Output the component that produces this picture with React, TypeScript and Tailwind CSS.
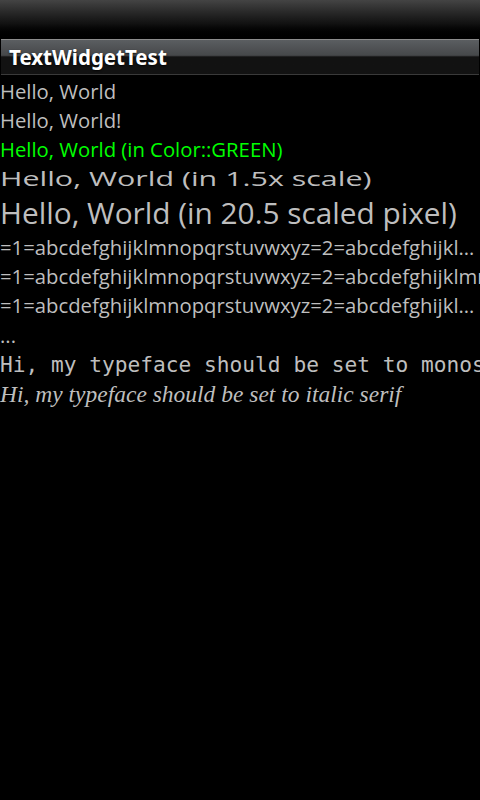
import React from 'react';

const sans = "font-['Open_Sans','Noto_Sans',sans-serif]";

export default function App() {
    return (
        <div className="w-[480px] h-[800px] bg-black overflow-hidden">
            {/* status bar */}
            <div className="h-[39px] bg-gradient-to-b from-[#444444] via-[#121212] via-60% to-black" />

            {/* title bar */}
            <div className="h-[36px] mx-[1px] border-t border-[#8c8c8c] border-b border-b-[#3a3a3a] bg-gradient-to-b from-[#5b5e61] from-0% via-[#46484a] via-45% to-[#121212] to-50% flex items-center">
                <span className="pl-[8px] text-[20.5px] font-bold text-white [text-shadow:0_1px_2px_rgba(0,0,0,0.8)] font-['Noto_Sans','Open_Sans',sans-serif]">
                    TextWidgetTest
                </span>
            </div>

            {/* text views */}
            <div className={`flex flex-col pt-[2px] text-[#bebebe] ${sans}`}>
                <div className="h-[29px] leading-[29px] text-[20.3px] whitespace-nowrap">Hello, World</div>
                <div className="h-[29px] leading-[29px] text-[20.3px] whitespace-nowrap">Hello, World!</div>
                <div className="h-[29px] leading-[29px] text-[20.3px] whitespace-nowrap text-[#00ff00]">Hello, World (in Color::GREEN)</div>
                <div className="h-[29px] leading-[29px] text-[20.3px] whitespace-nowrap origin-left scale-x-150">Hello, World (in 1.5x scale)</div>
                <div className="h-[40px] leading-[40px] text-[29.8px] whitespace-nowrap">Hello, World (in 20.5 scaled pixel)</div>
                <div className="h-[29px] leading-[29px] text-[20.3px] whitespace-nowrap overflow-hidden text-ellipsis w-[480px]">
                    =1=abcdefghijklmnopqrstuvwxyz=2=abcdefghijklmnopqrstuvwxyz=3=abcdefghijklmnopqrstuvwxyz
                </div>
                <div className="h-[29px] leading-[29px] text-[20.3px] whitespace-nowrap overflow-hidden w-[480px]">
                    =1=abcdefghijklmnopqrstuvwxyz=2=abcdefghijklmnopqrstuvwxyz=3=abcdefghijklmnopqrstuvwxyz
                </div>
                <div className="h-[29px] leading-[29px] text-[20.3px] whitespace-nowrap overflow-hidden text-ellipsis w-[480px]">
                    =1=abcdefghijklmnopqrstuvwxyz=2=abcdefghijklmnopqrstuvwxyz=3=abcdefghijklmnopqrstuvwxyz
                </div>
                <div className="h-[30px] leading-[30px] text-[20.3px]">...</div>
                <div className="h-[30px] leading-[30px] text-[21.2px] whitespace-nowrap overflow-hidden w-[480px] font-['DejaVu_Sans_Mono',monospace]">
                    Hi, my typeface should be set to monospace
                </div>
                <div className="h-[29px] leading-[29px] text-[23.5px] whitespace-nowrap italic font-['Liberation_Serif',serif]">
                    Hi, my typeface should be set to italic serif
                </div>
            </div>
        </div>
    );
}
